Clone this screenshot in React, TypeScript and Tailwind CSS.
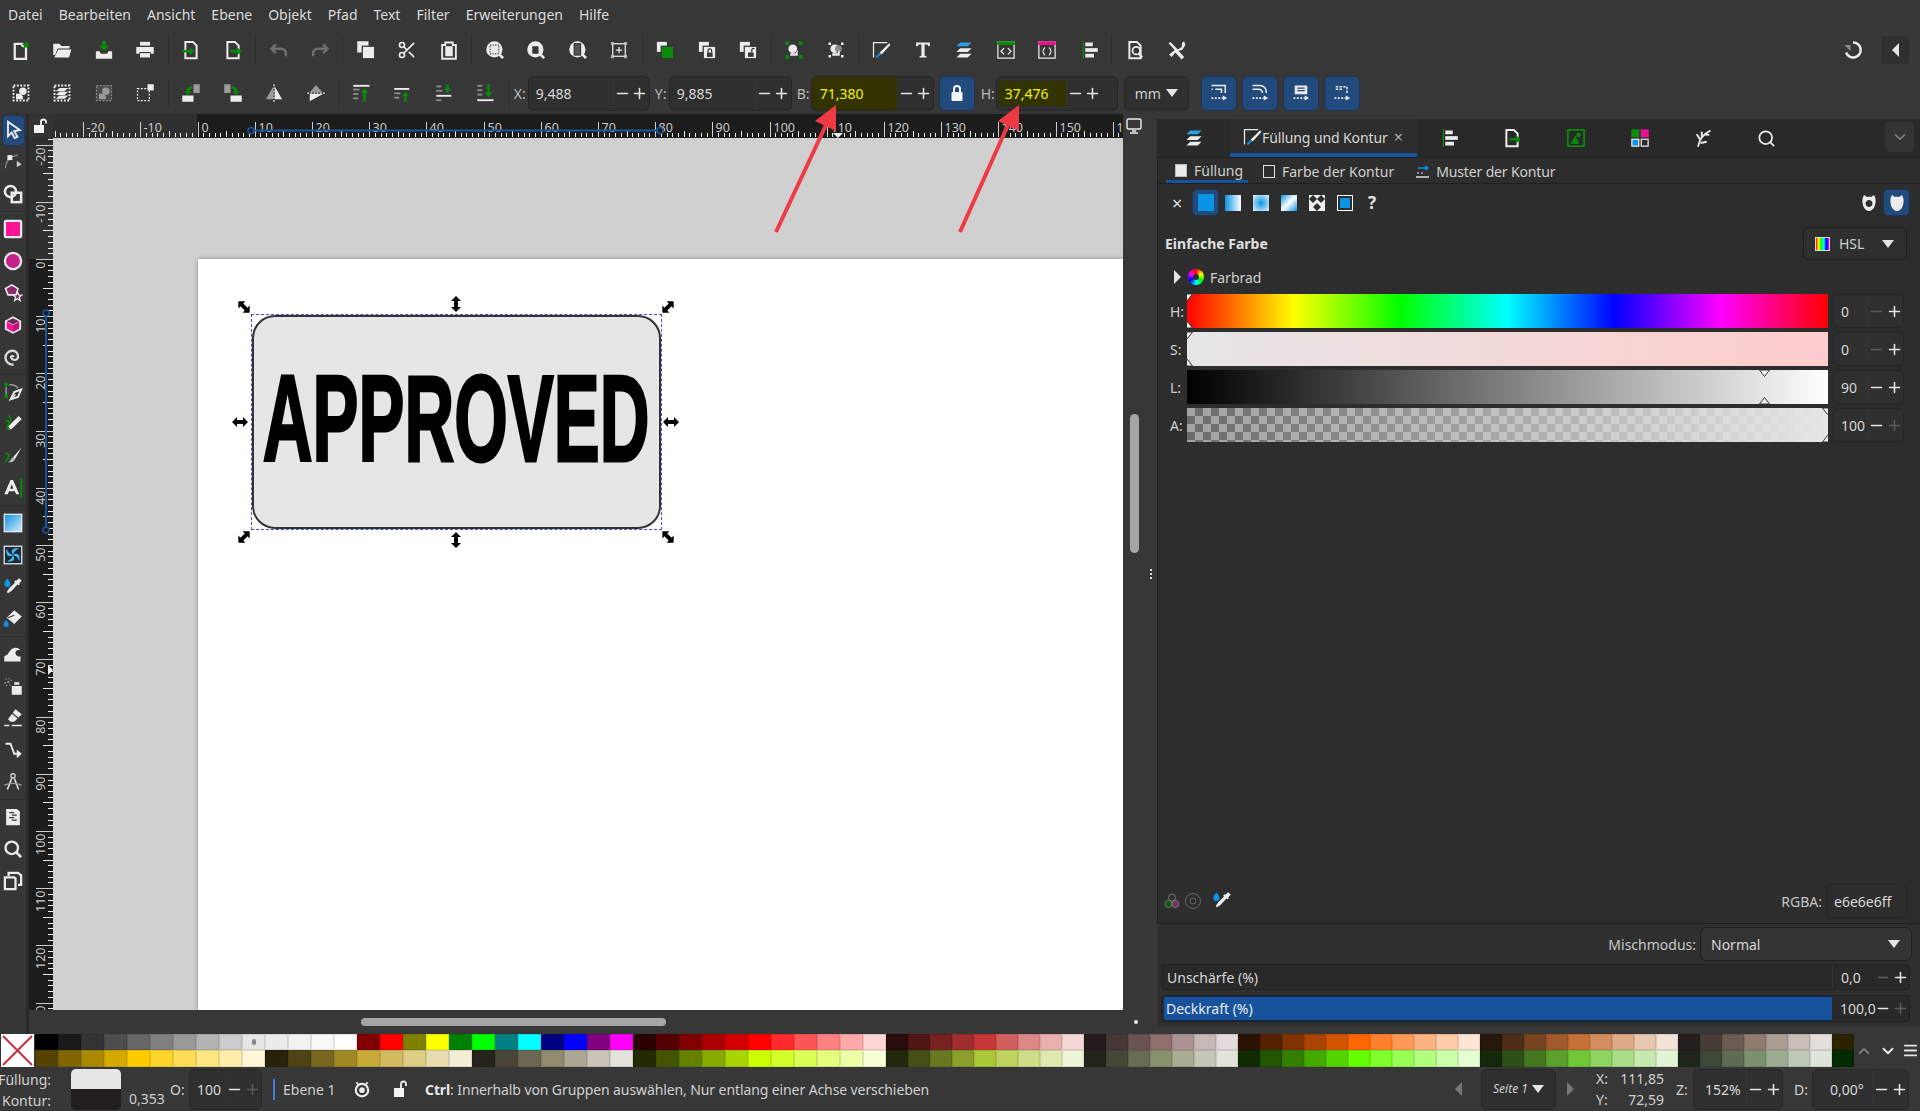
import type { ReactNode } from 'react';
import { Minus, Plus, Scissors, Search, ChevronDown, ChevronUp, Menu } from 'lucide-react';

const W = '#ececec';
const G = '#0a8a0a';
const B = '#0a94e6';
const D = '#8a8a8a';

function I({ children, s = 20 }: { children: ReactNode; s?: number }) {
  return (
    <svg width={s} height={s} viewBox="0 0 16 16" className="shrink-0">
      {children}
    </svg>
  );
}

// shared little pieces of the inkscape icon set
const doc = <path d="M3.5 1.5h6l3 3v10h-9z" fill="none" stroke={W} strokeWidth="1.6" />;
const dashBox = <rect x="2" y="2" width="12" height="12" fill="none" stroke={W} strokeWidth="1.5" strokeDasharray="1.5 1.2" />;
const pict = <g><circle cx="9.5" cy="6.5" r="3" fill={W} /><path d="M4 13V8.5h3.5l2 2V13z" fill={W} /></g>;
const shield = 'M3 1C1 4 1 8 2 11c1 4 4 6 6 6s5-2 6-6c1-3 1-7-1-10l-3 2c-1-.3-3-.3-4 0z';

const top1: ReactNode[][] = [
  [
    <I><path d="M3 3h6v1.5l3 1V15H3z" fill="none" stroke={W} strokeWidth="1.8" /><polygon points="12,0.5 13,3 15.5,3 13.5,4.7 14.3,7.2 12,5.7 9.8,7.2 10.5,4.7 8.5,3 11,3" fill={G} /></I>,
    <I><path d="M1 3h5l1.5 1.7H14v2H4.5L2.5 12H1z" fill={W} /><path d="M5 7.6h10.5L13.6 14H1.8z" fill={W} /></I>,
    <I><path d="M6.6 0.5h2.8v4H12L8 8.5 4 4.5h2.6z" fill={G} /><path d="M1.5 9h3l1 2h5l1-2h3v6h-13z" fill={W} /></I>,
    <I><rect x="4" y="1.5" width="8" height="3" fill={W} /><path d="M1 5.5h14V11h-2.5V9.5h-9V11H1z" fill={W} /><rect x="4" y="10.5" width="8" height="3.5" fill={W} /></I>,
  ],
  [
    <I>{doc}<path d="M1 8h6V5.5L10.5 9 7 12.5V10H1z" fill={G} /></I>,
    <I>{doc}<path d="M6 8h5V5.5L15 9l-4 3.5V10H6z" fill={G} /></I>,
  ],
  [
    <I><path d="M5.5 3.5 2 7l3.5 3.5M2.5 7H10a3.5 3.5 0 0 1 3.5 3.5V13" fill="none" stroke="#6e6e6e" strokeWidth="2" /></I>,
    <I><path d="M10.5 3.5 14 7l-3.5 3.5M13.5 7H6a3.5 3.5 0 0 0-3.5 3.5V13" fill="none" stroke="#6e6e6e" strokeWidth="2" /></I>,
  ],
  [
    <I><rect x="1" y="1" width="9" height="9" fill={W} /><rect x="5" y="5" width="10" height="10" fill={W} stroke="#363636" /></I>,
    <Scissors size={20} color={W} strokeWidth={2} />,
    <I><path d="M5 2h6v2h2.5v11h-11V4H5z" fill="none" stroke={W} strokeWidth="1.5" /><rect x="5" y="5" width="6" height="8" fill={W} /></I>,
  ],
  [
    <I><circle cx="7.5" cy="7.5" r="6.5" fill={W} /><path d="m11.5 11.5 3 3" stroke={W} strokeWidth="2.2" /><rect x="4" y="4" width="7" height="7" fill="none" stroke="#444" strokeDasharray="1 1" /></I>,
    <I><circle cx="7.5" cy="7.5" r="6.5" fill={W} /><path d="m11.5 11.5 3 3" stroke={W} strokeWidth="2.2" /><rect x="5" y="5" width="5" height="6" fill="#363636" /></I>,
    <I><circle cx="7.5" cy="7.5" r="6.5" fill={W} /><path d="m11.5 11.5 3 3" stroke={W} strokeWidth="2.2" /><rect x="5" y="3" width="5" height="9" fill="#555" stroke="#333" /></I>,
    <I><path d="M4 2H2v2M12 2h2v2M4 14H2v-2M12 14h2v-2" fill="none" stroke="#aaa" /><rect x="3" y="3" width="10" height="10" fill="none" stroke={W} /><path d="M8 5.5v5M5.5 8h5" stroke={W} /></I>,
  ],
  [
    <I><rect x="1.5" y="1.5" width="8" height="8" fill={W} /><rect x="5" y="5" width="10" height="10" fill={G} stroke="#363636" /></I>,
    <I><rect x="1.5" y="1.5" width="8" height="8" fill={W} /><rect x="5" y="5" width="10" height="10" fill={W} stroke="#363636" /><path d="M8 10h4.5v3.5H8z" fill="#363636" /><path d="M8.8 10V8.5a1.4 1.4 0 0 1 2.9 0V10" fill="none" stroke="#363636" /></I>,
    <I><rect x="1.5" y="1.5" width="8" height="8" fill={W} /><rect x="5" y="5" width="10" height="10" fill={W} stroke="#363636" /><path d="M8 10h4.5v3.5H8z" fill="#363636" /><path d="M11 10V8a1.4 1.4 0 0 1 2.2-1" fill="none" stroke="#363636" /></I>,
  ],
  [
    <I><path d="M1 1h3v3H1zM12 1h3v3h-3zM1 12h3v3H1zM12 12h3v3h-3z" fill={G} /><circle cx="7" cy="7" r="3.5" fill={W} /><path d="M5 10.5h4l2-2.5v4.5H5z" fill={W} /></I>,
    <I><path d="M2 2h2v2H2zM12 2h2v2h-2zM2 12h2v2H2zM12 12h2v2h-2z" fill={W} /><circle cx="7" cy="7" r="3.5" fill={W} /><circle cx="10" cy="7" r="2.8" fill="#888" /><path d="M5 10.5h4l2-2.5v4.5H5z" fill={W} /></I>,
  ],
  [
    <I><path d="M2 14V2h11" fill="none" stroke={W} /><path d="M14.5 2.5 7 10l1.5 1.5L15.5 4z" fill={W} /><path d="M7 10l-3 3 .5 1.5L8 11.5z" fill={B} /></I>,
    <I><path d="M2.5 2h11v3h-1.2L11.5 3.5H9.3V12.5l1.5.5v1H5.2v-1l1.5-.5V3.5H4.5L3.7 5H2.5z" fill={W} /></I>,
    <I><path d="M5 2h9l-3 3H2z" fill="#2aa3e6" /><path d="M5 6.5h9l-3 3H2z" fill={W} /><path d="M5 11h9l-3 3H2z" fill={W} /></I>,
    <I><rect x="1.5" y="1.5" width="13" height="13" fill="none" stroke={W} /><rect x="1" y="1" width="14" height="3" fill={G} /><path d="M6.5 6.5 4 9l2.5 2.5M9.5 6.5 12 9l-2.5 2.5" fill="none" stroke={W} /></I>,
    <I><rect x="1.5" y="1.5" width="13" height="13" fill="none" stroke={W} /><rect x="1" y="1" width="14" height="3" fill="#e8108c" /><path d="M6.5 6C5 6 5.5 8.8 4.5 9c1 .2.5 3 2 3M9.5 6c1.5 0 1 2.8 2 3-1 .2-.5 3-2 3" fill="none" stroke={W} /></I>,
    <I><rect x="3" y="1" width="1" height="14" fill={G} /><rect x="5" y="2" width="6" height="3" fill={W} /><rect x="5" y="6.5" width="10" height="3" fill={W} /><rect x="5" y="11" width="7" height="3" fill={W} /></I>,
  ],
  [
    <I>{doc}<circle cx="9" cy="8.5" r="3" fill="#363636" stroke={W} strokeWidth="1.4" /><path d="m10.8 10.8 3 3" stroke={W} strokeWidth="1.8" /></I>,
    <I><path d="m2 2.5 1.5-1 6 6 3-2 .5-3.5 1.5-1 1 3-2.5 4-3 .5 4.5 5-2 2-5-5.5-3 3.5-2-2L7 8z" fill={W} /></I>,
  ],
];

const top2: ReactNode[][] = [
  [
    <I>{dashBox}{pict}</I>,
    <I>{dashBox}<path d="M6 4h7l-3 2.5H3zM6 7h7l-3 2.5H3zM6 10h7l-3 2.5H3z" fill={W} /></I>,
    <I><rect x="2" y="2" width="12" height="12" fill="#4a4a4a" stroke="#8a8a8a" strokeDasharray="1.5 1.2" /><circle cx="9.5" cy="6.5" r="3" fill="#9a9a9a" /><path d="M4 13V8.5h3.5l2 2V13z" fill="#9a9a9a" /></I>,
    <I><rect x="2" y="4.5" width="9.5" height="9.5" fill="none" stroke={W} strokeDasharray="1.5 1.2" /><rect x="10" y="1" width="5" height="5" fill={W} /></I>,
  ],
  [
    <I><rect x="1" y="10" width="9" height="5" fill={W} /><rect x="10" y="1" width="5" height="7" fill="#9a9a9a" /><path d="M9 2.5C6 2.5 4.5 4 4.5 6.5H2.5L5.5 9.5l3-3h-2C6.5 5.5 7.5 4.5 9 4.5z" fill={G} /></I>,
    <I><rect x="6" y="10" width="9" height="5" fill={W} /><rect x="1" y="1" width="5" height="7" fill="#9a9a9a" /><path d="M7 2.5c3 0 4.5 1.5 4.5 4h2l-3 3-3-3h2C9.5 5.5 8.5 4.5 7 4.5z" fill={G} /></I>,
    <I><path d="M7.3 3v10H1.5z" fill="#9a9a9a" /><path d="M8.7 3v10h5.8z" fill={W} /><path d="M8 1v14" stroke={W} strokeDasharray="1.5 1" /></I>,
    <I><path d="M3 7.3h10L8 1.500z" fill="#9a9a9a" /><path d="M3 8.7h10.5L3 14.5z" fill={W} /><path d="M1 8h14" stroke={W} strokeDasharray="1.5 1" /></I>,
  ],
  [
    <I><rect x="1" y="1.5" width="13" height="1.5" fill={W} /><rect x="1" y="4.5" width="5" height="1.5" fill={D} /><rect x="1" y="8" width="4" height="1.5" fill={D} /><rect x="1" y="11.5" width="4" height="1.5" fill={D} /><path d="M10 4 13 8h-2v7H9V8H7z" fill={G} /></I>,
    <I><rect x="1" y="4" width="12" height="1.5" fill={W} /><rect x="1" y="7.5" width="5" height="1.5" fill={D} /><rect x="1" y="11" width="4" height="1.5" fill={D} /><path d="M10 7 13 10.5h-2V15H9v-4.5H7z" fill={G} /></I>,
    <I><rect x="1" y="2" width="4" height="1.5" fill={D} /><rect x="1" y="5.5" width="5" height="1.5" fill={D} /><rect x="1" y="9.5" width="12" height="1.5" fill={W} /><rect x="1" y="13" width="4" height="1.5" fill={D} /><path d="M9 1h2v3.5h2L10 8 7 4.5h2z" fill={G} /></I>,
    <I><rect x="1" y="1.5" width="4" height="1.5" fill={D} /><rect x="1" y="5" width="4" height="1.5" fill={D} /><rect x="1" y="8.5" width="4" height="1.5" fill={D} /><rect x="1" y="13" width="13" height="1.5" fill={W} /><path d="M9 1h2v6.5h2L10 11.5 7 7.5h2z" fill={G} /></I>,
  ],
];

const flowBtn: ReactNode[] = [
  <I><path d="M2 2h11v6M5 5h5v3M2 5h1" fill="none" stroke={W} strokeWidth="1.2" /><path d="M2 12h9" stroke={W} strokeDasharray="1.5 1.2" strokeWidth="1.4" /><path d="m11 10 3.5 2-3.5 2z" fill={W} /></I>,
  <I><path d="M2 2h6a5 5 0 0 1 5 5v1M2 5h5a3 3 0 0 1 3 3" fill="none" stroke={W} strokeWidth="1.2" /><path d="M2 12h9" stroke={W} strokeDasharray="1.5 1.2" strokeWidth="1.4" /><path d="m11 10 3.5 2-3.5 2z" fill={W} /></I>,
  <I><path d="M3 2h10v7H3z" fill={W} /><path d="M5 4h6M5 6h6" stroke="#234a7c" /><path d="M2 12h9" stroke={W} strokeDasharray="1.5 1.2" strokeWidth="1.4" /><path d="m11 10 3.5 2-3.5 2z" fill={W} /></I>,
  <I><path d="M3 3h9v6M3 5h6" fill="none" stroke={W} strokeWidth="1.2" strokeDasharray="2 1" /><path d="M2 12h9" stroke={W} strokeDasharray="1.5 1.2" strokeWidth="1.4" /><path d="m11 10 3.5 2-3.5 2z" fill={W} /></I>,
];

const cursor = <path d="M4 1.5 13.5 8 9 9l2.5 4.5-2.2 1L7 10l-3 3z" fill="#234a7c" stroke={W} strokeWidth="1.5" />;

const tools: ReactNode[][] = [
  [
    <span className="flex h-[31px] w-[23px] items-center justify-center rounded-[5px] border border-[#1c3557] bg-[#234a7c]"><I>{cursor}</I></span>,
    <I><path d="M2 13C2 8 4 4 12 2.5" fill="none" stroke="#8a8a8a" /><rect x="3.5" y="2.5" width="4" height="4" fill={W} /><path d="m11 7 4 3-4 2z" fill="#ccc" /></I>,
    <I><circle cx="6" cy="6" r="4.500" fill="none" stroke={W} strokeWidth="2" /><rect x="7" y="7" width="7.5" height="7.5" fill="none" stroke={W} strokeWidth="2" /></I>,
  ],
  [
    <I><rect x="1.5" y="1.5" width="13" height="13" rx="1" fill="#ff1493" stroke={W} strokeWidth="1.8" /></I>,
    <I><circle cx="8" cy="8" r="6.5" fill="#c8208a" stroke={W} strokeWidth="1.8" /></I>,
    <I><path d="m7 1.5 5 3-1.5 5H4l-2-5z" fill="#8e2a6e" stroke={W} strokeWidth="1.3" /><path d="m11.5 7 1 2.5 2.5.2-2 1.700.7 2.600-2.200-1.400-2.200 1.400.7-2.600-2-1.700 2.500-.2z" fill="#8e2a6e" stroke={W} /></I>,
    <I><path d="M8 1 14.5 4.5v7L8 15l-6.5-3.5v-7z" fill={W} /><path d="M8 8v5.500l-5-2.800V5.300z" fill="#ff1493" /><path d="M8 8v5.500l5-2.800V5.300z" fill="#c2127a" /><path d="M8 2.5 13 5 8 7.500 3 5z" fill="#6e2a5a" /></I>,
    <I><path d="M8.500 8a1 1 0 0 0-2 .5 3 3 0 0 0 5.500 0C12.500 5 10 3 7.500 3A5.500 5.500 0 0 0 2 8.500C2 12 5 14.500 8.500 14" fill="none" stroke="#d8d8d8" strokeWidth="1.900" /></I>,
  ],
  [
    <I><circle cx="2.5" cy="2" r="1.7" fill={G} /><rect x="1" y="10" width="3" height="3" fill={G} /><path d="M2.5 10V4M5 2c3 0 6 1 7 3" fill="none" stroke="#aaa" /><path d="M14.5 6 9 8l-3 6 6-2z" fill="none" stroke={W} strokeWidth="1.5" /><path d="m6 14 4-4" stroke={W} /></I>,
    <I><path d="M2 6c1-1 2.5-1 3 .5S3 9 3.500 11" fill="none" stroke={G} strokeWidth="1.4" /><path d="M5 1c-1 2 3 2 1 5" fill="none" stroke={G} strokeWidth="1.2" /><path d="m12.5 1.5 2.5 2.5-8 8-3 .5.5-3z" fill={W} /><path d="m3 13 1-3 2 2z" fill={G} /></I>,
    <I><path d="M2 6c2 0 3 .5 2.500 2.500C4 11 2 11 2 13" fill="none" stroke={G} strokeWidth="1.5" /><path d="m15 1-7 8 1.500 1.500z" fill={W} /><path d="M8 9c-2 1-1.500 3-4 4 3 .5 5-1 5.500-2.500z" fill="#bbb" /></I>,
    <I><path d="M6 1.5h2l5 11.5H10.500L9.500 10.500H4.800L3.800 13H1z" fill={W} /><path d="M7 5 5.700 8.500h2.600z" fill="#363636" /><rect x="14" y="0" width="1.5" height="16" fill={G} /></I>,
  ],
  [
    <svg width="20" height="20" viewBox="0 0 16 16"><defs><linearGradient id="grd" x1="0" y1="0" x2="1" y2="1"><stop offset="0" stopColor="#0a8fe0" /><stop offset="1" stopColor="#d8eefc" /></linearGradient></defs><rect x="1" y="1" width="14" height="14" fill="url(#grd)" stroke={W} /></svg>,
    <I><rect x="1" y="1" width="14" height="14" fill="#1a2a38" stroke={W} /><path d="M8 8C5 3 10 2 13 3 10 4 9 5 8 8c5-3 6 2 5 5-1-3-2-4-5-5 3 5-2 6-5 5 3-1 4-2 5-5C3 11 2 6 3 3c1 3 2 4 5 5z" fill="#44b8f0" /></I>,
    <I><path d="m13 1 2 2-2 2 .5.5-1 1-1-.5L7 11l-3 2-1-1 2-3 4.500-4.500-.5-1 1-1 .5.5z" fill={W} /><path d="M3.500 1c1.500 2 2.500 3 2.500 4.500a2.500 2.500 0 0 1-5 0C1 4 2 3 3.500 1z" fill={B} /></I>,
    <I><path d="M9 1 15 6l-6 6-6-5z" fill={W} /><path d="m4 7 5-2" stroke="#363636" /><path d="M2.500 8.500c1 1.500 2 2.500 2 3.800a2 2 0 0 1-4 0C.5 11 1.500 10 2.500 8.500z" fill={B} /></I>,
  ],
  [
    <I><path d="M1 14V10c1-1 2-1 3-2 1-2 3-5 6-5 2 0 3 1 4 2-3-1-5 1-3.500 3.500.5 1 1.500 1.500 3.500 1.500v4z" fill={W} /></I>,
    <I><rect x="7" y="8" width="8" height="7" fill={W} /><rect x="9" y="5" width="4" height="2" fill={W} /><path d="M2 2h1v1H2zM4.500 1.500h1v1h-1zM1 5h1.500v1H1zM3.500 4h1.500v1.500H3.500zM6 3h1v1H6zM2.500 7h1v1h-1zM5 6.500h1v1H5z" fill="#999" /></I>,
    <I><path d="m10 1 5 4-6 6H6L4 9z" fill={W} /><path d="m7 4 5 4" stroke="#363636" /><path d="M1 14h4M7 14h8" stroke={W} strokeWidth="1.3" /></I>,
    <I><path d="M2 3 6 3 9 11l3.500 0" fill="none" stroke={W} strokeWidth="1.5" /><path d="m11 7.500 4 3.500-4 3.500z" fill={W} /></I>,
    <I><circle cx="8" cy="3" r="1.7" fill="none" stroke="#ddd" /><path d="M7 5 3.500 14M9 5l3.500 9" stroke="#ddd" strokeWidth="1.3" /><path d="M1 10.500c4-1.500 10-1.500 14 0" fill="none" stroke="#999" /></I>,
  ],
  [
    <I><path d="M2.500 1.500H11l2.500 2v11h-11z" fill={W} /><path d="M5 4.500h4M7 6.500h4M5 8.500h4M7 10.500h4" stroke="#363636" /></I>,
    <I><circle cx="7" cy="7" r="5" fill="none" stroke={W} strokeWidth="1.8" /><path d="m10.500 10.500 4 4" stroke={W} strokeWidth="2.2" /></I>,
    <I><path d="M1.500 5H9l1 1v8.500H1.500z" fill="none" stroke={W} strokeWidth="1.8" /><path d="M4.500 4V1.500H12L14.500 3.500V11H12" fill="none" stroke={W} strokeWidth="1.8" /></I>,
  ],
];

const gray = ['#000000','#1a1a1a','#333333','#4d4d4d','#666666','#808080','#999999','#b3b3b3','#cccccc','#e6e6e6','#ececec','#f2f2f2','#f9f9f9','#ffffff'];
const row1 = [...gray,'#800000','#ff0000','#808000','#ffff00','#008000','#00ff00','#008080','#00ffff','#000080','#0000ff','#800080','#ff00ff',
  '#2b0000','#550000','#800000','#aa0000','#d40000','#ff0000','#ff2a2a','#ff5555','#ff8080','#ffaaaa','#ffd5d5',
  '#280b0b','#501616','#782121','#a02c2c','#c83737','#d35f5f','#de8787','#e9afaf','#f4d7d7',
  '#241c1c','#483737','#6c5353','#916f6f','#ac9393','#c8b7b7','#e3dbdb',
  '#2b1100','#552200','#803300','#aa4400','#d45500','#ff6600','#ff7f2a','#ff9955','#ffb380','#ffccaa','#ffe6d5',
  '#28170b','#502d16','#784421','#a05a2c','#c87137','#d38d5f','#deaa87','#e9c6af','#f4e3d7',
  '#241f1c','#483e37','#6c5d53','#917c6f','#ac9d93','#c8beb7','#e3dedb','#2b2200'];
const row2 = ['#554400','#806600','#aa8800','#d4aa00','#ffcc00','#ffd42a','#ffdd55','#ffe680','#ffeeaa','#fff6d5',
  '#28220b','#504416','#786721','#a08924','#c8ab37','#d3bc5f','#decd87','#e9ddaf','#f4eed7',
  '#24221c','#484537','#6c6753','#918a6f','#aca793','#c8c4b7','#e3e2db',
  '#222b00','#445500','#668000','#88aa00','#aad400','#ccff00','#d4ff2a','#ddff55','#e5ff80','#eeffaa','#f6ffd5',
  '#22280b','#445016','#677821','#89a02c','#abc837','#bcd35f','#cdde87','#dde9af','#eef4d7',
  '#22241c','#454837','#676c53','#8a916f','#a7ac93','#c4c8b7','#e2e3db',
  '#112b00','#225500','#338000','#44aa00','#55d400','#66ff00','#7fff2a','#99ff55','#b3ff80','#ccffaa','#e5ffd5',
  '#16280b','#2d5016','#447821','#5aa02c','#71c837','#8dd35f','#aade87','#c6e9af','#e3f4d7',
  '#1f241c','#3e4837','#5d6c53','#7c916f','#9dac93','#bec8b7','#dee3db','#002b00'];

const menus = ['Datei', 'Bearbeiten', 'Ansicht', 'Ebene', 'Objekt', 'Pfad', 'Text', 'Filter', 'Erweiterungen', 'Hilfe'];

function Sep() {
  return <div className="mx-[1.7px] h-[30px] w-px bg-[#2f2f2f]" />;
}

function Tri({ up, dim, side }: { up?: boolean; dim?: boolean; side?: 'l' | 'r' }) {
  const pts = side === 'l' ? '8,0 8,14 1,7' : side === 'r' ? '1,0 1,14 8,7' : up ? '0,8 12,8 6,0' : '0,0 12,0 6,8';
  return (
    <svg width={side ? 9 : 12} height={side ? 14 : 8} className="shrink-0">
      <polygon points={pts} fill={dim ? '#777' : '#e4e4e4'} />
    </svg>
  );
}

function Spin({ v, className, field, tc, minusDim, plusDim }: { v: string; className: string; field?: string; tc?: string; minusDim?: boolean; plusDim?: boolean }) {
  return (
    <div className={`flex items-stretch rounded-[6px] border border-[#262626] bg-[#2f2f2f] ${className}`}>
      <div className={`flex min-w-0 flex-1 ${field ?? ''}`}>
        <span className={`flex items-center ${tc ?? 'pl-[7px] text-[#d8d8d8]'}`}>{v}</span>
      </div>
      <div className="flex w-[18px] items-center justify-center border-l border-[#333]">
        <Minus size={17} strokeWidth={2.2} color={minusDim ? '#5c5c5c' : '#e6e6e6'} />
      </div>
      <div className="flex w-[18px] items-center justify-center">
        <Plus size={17} strokeWidth={2.2} color={plusDim ? '#5c5c5c' : '#e6e6e6'} />
      </div>
    </div>
  );
}

function Ruler() {
  const ticks = [];
  for (let mm = -25; mm <= 162; mm++) {
    const x = Math.round(144.5 + mm * 5.72) + 0.5;
    const major = mm % 10 === 0;
    const mid = mm % 5 === 0;
    ticks.push(<line key={mm} x1={x} x2={x} y1={major ? 8 : mid ? 17 : 19} y2={23} stroke={major ? '#cfcfcf' : '#f0f0f0'} />);
    if (major) {
      ticks.push(<text key={`t${mm}`} x={x + 3} y={18} fontSize="12.5" fill="#c9c9c9">{mm}</text>);
    }
  }
  return (
    <svg width="1070" height="24" className="block font-['Noto_Sans',sans-serif]">
      {ticks}
      <line x1="198" x2="607" y1="16.5" y2="16.5" stroke="#1a56a0" strokeWidth="2" />
      <circle cx="198" cy="16.5" r="3" fill="#1c1c1c" stroke="#1a56a0" strokeWidth="1.5" />
      <circle cx="607" cy="16.5" r="3" fill="#1c1c1c" stroke="#1a56a0" strokeWidth="1.5" />
      <polygon points="780,19 790,19 785,24" fill="#f0f0f0" />
    </svg>
  );
}

function VRuler() {
  const ticks = [];
  for (let mm = -25; mm <= 134; mm++) {
    const y = Math.round(121 + mm * 5.72) + 0.5;
    const major = mm % 10 === 0;
    const mid = mm % 5 === 0;
    ticks.push(<line key={mm} y1={y} y2={y} x1={major ? 7 : mid ? 14 : 19} x2={24} stroke={major ? '#cfcfcf' : '#f0f0f0'} />);
    if (major) {
      ticks.push(<text key={`t${mm}`} x={16} y={y + 2} fontSize="12.5" fill="#c9c9c9" textAnchor="end" transform={`rotate(-90 16 ${y + 2})`}>{mm}</text>);
    }
  }
  return (
    <svg width="24" height="872" className="block font-['Noto_Sans',sans-serif]">
      {ticks}
      <line x1="17" x2="17" y1="175" y2="392" stroke="#1a56a0" strokeWidth="2" />
      <circle cx="17" cy="175" r="3" fill="#1c1c1c" stroke="#1a56a0" strokeWidth="1.5" />
      <circle cx="17" cy="392" r="3" fill="#1c1c1c" stroke="#1a56a0" strokeWidth="1.5" />
      <polygon points="19,527 19,537 24,532" fill="#f0f0f0" />
    </svg>
  );
}

function Handle({ className }: { className: string }) {
  return (
    <svg width="16" height="16" viewBox="0 0 16 16" className={`absolute ${className}`}>
      <path d="M0 8 5 3v3h6V3l5 5-5 5v-3H5v3z" fill="#000" />
    </svg>
  );
}

function Thumb({ className, up }: { className: string; up?: boolean }) {
  return (
    <svg width="11" height="7" className={`absolute ${className}`}>
      <polygon points={up ? '0.5,7 10.5,7 5.5,0.5' : '0.5,0 10.5,0 5.5,6.5'} fill="#f4f4f4" stroke="#333" />
    </svg>
  );
}

function SliderRow({ label, bar, thumbs, v, minusDim, plusDim }: { label: string; bar: string; thumbs: ReactNode; v: string; minusDim?: boolean; plusDim?: boolean }) {
  return (
    <div className="flex h-[34px] items-stretch pl-[12px]">
      <span className="flex w-[17px] items-center text-[#d0d0d0]">{label}</span>
      <div className={`relative w-[641px] overflow-hidden ${bar}`}>{thumbs}</div>
      <Spin v={v} className="ml-[5px] w-[71px]" minusDim={minusDim} plusDim={plusDim} />
    </div>
  );
}

function Tools() {
  return (
    <div className="flex w-[29px] shrink-0 flex-col border-r-[3px] border-[#2a2a2a] bg-[#363636]">
      {tools.map((grp, i) => (
        <div key={i} className="flex flex-col">
          {i > 0 && <div className="my-px h-px bg-[#2e2e2e]" />}
          {grp.map((ic, j) => (
            <div key={j} className="flex h-[32px] items-center justify-center">{ic}</div>
          ))}
        </div>
      ))}
    </div>
  );
}

function CanvasArea() {
  return (
    <div className="flex w-[1116px] shrink-0 flex-col">
      <div className="flex h-[24px]">
        <div className="flex w-[24px] items-center justify-center bg-[#333]">
          <svg width="16" height="16" viewBox="0 0 16 16">
            <rect x="1" y="7" width="10" height="8" fill="#f2f2f2" />
            <path d="M8 7V4a2.5 2.5 0 0 1 5 0v1.5" fill="none" stroke="#f2f2f2" strokeWidth="1.8" />
          </svg>
        </div>
        <div className="w-[1070px] bg-[linear-gradient(to_right,#303030_144px,#1c1c1c_144px)]">
          <Ruler />
        </div>
        <div className="flex w-[22px] items-center justify-center">
          <svg width="16" height="16" viewBox="0 0 16 16">
            <rect x="1" y="1" width="14" height="10" rx="1.5" fill="none" stroke="#eee" strokeWidth="1.4" />
            <path d="M6 13h4M4 15h8" stroke="#eee" strokeWidth="1.4" />
          </svg>
        </div>
      </div>
      <div className="flex h-[872px]">
        <div className="w-[24px] bg-[linear-gradient(to_bottom,#303030_121px,#1c1c1c_121px)]">
          <VRuler />
        </div>
        <div className="relative w-[1070px] overflow-hidden bg-[#d0d0d0]">
          <div className="absolute left-[145px] top-[121px] h-[900px] w-[1100px] bg-white shadow-[0_0_4px_rgba(0,0,0,0.35)]" />
          <div className="absolute left-[199px] top-[177px] flex h-[214px] w-[409px] items-center justify-center overflow-hidden rounded-[23px] border-2 border-[#333] bg-[#e6e6e6] pb-[8px]">
            <span className="origin-center scale-x-[0.56] whitespace-nowrap font-['Liberation_Sans',sans-serif] text-[123px] font-bold leading-none text-black [-webkit-text-stroke:3px_black]">
              APPROVED
            </span>
          </div>
          <div className="absolute left-[198px] top-[176px] h-[216px] w-[411px] border border-dashed border-[#4a4ad0]" />
          <Handle className="left-[183px] top-[161px] rotate-45" />
          <Handle className="left-[395px] top-[158px] rotate-90" />
          <Handle className="left-[607px] top-[161px] -rotate-45" />
          <Handle className="left-[179px] top-[276px]" />
          <Handle className="left-[610px] top-[276px]" />
          <Handle className="left-[183px] top-[391px] -rotate-45" />
          <Handle className="left-[395px] top-[394px] rotate-90" />
          <Handle className="left-[607px] top-[391px] rotate-45" />
        </div>
        <div className="flex w-[22px] justify-center">
          <div className="mt-[276px] h-[139px] w-[9px] rounded-full bg-[#a5a5a5]" />
        </div>
      </div>
      <div className="flex h-[24px] items-center">
        <div className="ml-[332px] h-[8px] w-[305px] rounded-full bg-[#a5a5a5]" />
        <div className="ml-[468px] h-[4px] w-[4px] rounded-full bg-[#e8e8e8]" />
      </div>
    </div>
  );
}

function Panel() {
  return (
    <div className="flex w-[763px] shrink-0 flex-col pt-[5px]">
      <div className="flex h-[38px] bg-[#292929]">
        <div className="flex w-[73px] items-center justify-center">
          <I><path d="M5 2h9l-3 3H2z" fill="#2aa3e6" /><path d="M5 6.5h9l-3 3H2z" fill={W} /><path d="M5 11h9l-3 3H2z" fill={W} /></I>
        </div>
        <div className="flex w-[187px] items-center border-b-4 border-[#17539c] bg-[#2d2d2d] pl-[12px] pt-[2px] text-[#d8d8d8]">
          <I><path d="M2 14V2h11" fill="none" stroke={W} /><path d="M14.5 2.5 7 10l1.5 1.5L15.5 4z" fill={W} /><path d="M7 10l-3 3 .5 1.5L8 11.5z" fill={B} /></I>
          <span className="whitespace-nowrap tracking-[-0.1px]">Füllung und Kontur</span>
          <span className="ml-[6px] text-[16px] leading-none text-[#aaa]">×</span>
        </div>
        {[
          <I><rect x="3" y="1" width="1" height="14" fill={G} /><rect x="5" y="2" width="6" height="3" fill={W} /><rect x="5" y="6.5" width="10" height="3" fill={W} /><rect x="5" y="11" width="7" height="3" fill={W} /></I>,
          <I>{doc}<path d="M6 8h5V5.5L15 9l-4 3.5V10H6z" fill={G} /></I>,
          <I><rect x="1.5" y="1.5" width="13" height="13" fill="none" stroke={G} strokeWidth="1.4" /><circle cx="10" cy="5.5" r="1.8" fill={G} /><path d="M3.5 12.5 7.5 6l3 6.5z" fill={G} /></I>,
          <I><rect x="1" y="1" width="6.5" height="6.5" fill={G} /><rect x="8.5" y="1" width="6.5" height="6.5" fill="#e8108c" /><rect x="1.5" y="9" width="5.5" height="5.5" fill={B} stroke={W} /><rect x="9" y="9" width="5.5" height="5.5" fill="#2a2a2a" stroke={W} /></I>,
          <I><path d="M4 15C5 9 8 5 14 2M5.5 9 3 5M7 7V3M9.5 5 13 5.5M6 12l5-1" fill="none" stroke={W} strokeWidth="1.5" /></I>,
          <Search size={19} color={W} strokeWidth={2.2} />,
        ].map((ic, i) => (
          <div key={i} className="flex w-[63.6px] items-center justify-center">{ic}</div>
        ))}
        <div className="ml-auto mr-[6px] mt-[3px] flex h-[30px] w-[29px] items-center justify-center rounded-[4px] bg-[#333]">
          <ChevronDown size={18} color="#888" />
        </div>
      </div>

      <div className="flex flex-1 flex-col border-l border-t border-[#1f1f1f] bg-[#2d2d2d]">
        <div className="flex h-[26px] items-center border-b border-[#1f1f1f] pt-[2px] text-[#d0d0d0]">
          <div className="ml-[8px] flex h-full w-[82px] items-center border-b-[3px] border-[#17539c] pl-[9px]">
            <div className="h-[13px] w-[12px] border border-[#bbb] bg-[#ececec]" />
            <span className="ml-[7px]">Füllung</span>
          </div>
          <div className="ml-[15px] h-[13px] w-[12px] border border-[#e0e0e0]" />
          <span className="ml-[7px]">Farbe der Kontur</span>
          <svg width="16" height="14" viewBox="0 0 16 14" className="ml-[21px]">
            <path d="M3 3h8" stroke={B} strokeWidth="1.5" /><path d="m10 0 4 3-4 3z" fill={B} />
            <path d="M2 8h2M6 8h2" stroke={W} /><path d="M1 12h13" stroke={W} strokeWidth="1.4" />
          </svg>
          <span className="ml-[5px] tracking-[-0.15px]">Muster der Kontur</span>
        </div>

        <div className="mt-[5px] flex h-[27px] items-center">
          <span className="ml-[14px] w-[20px] text-[18px] leading-none text-[#e0e0e0]">×</span>
          <div className="flex h-[27px] w-[27px] items-center justify-center rounded-[5px] border border-[#1c3557] bg-[#234a7c]">
            <div className="h-[17px] w-[16px] bg-[#0a94e6]" />
          </div>
          <div className="ml-[6px] h-[16px] w-[16px] bg-[linear-gradient(to_right,#0a94e6,#fff)]" />
          <div className="ml-[12px] h-[16px] w-[16px] bg-[radial-gradient(circle,#0a94e6,#e8f4fc)]" />
          <div className="ml-[12px] h-[16px] w-[16px] bg-[linear-gradient(135deg,#0a94e6,#fff,#0a94e6)]" />
          <svg width="16" height="16" viewBox="0 0 16 16" className="ml-[12px]">
            <rect width="16" height="16" fill="#eee" />
            <path d="M4 0l4 4-4 4-4-4zM12 0l4 4-4 4-4-4zM8 8l4 4-4 4-4-4z" fill="#2d2d2d" />
          </svg>
          <div className="ml-[12px] flex h-[16px] w-[16px] items-center justify-center border border-white">
            <div className="h-[10px] w-[10px] bg-[#0a94e6]" />
          </div>
          <span className="ml-[15px] text-[17px] font-bold text-[#e4e4e4]">?</span>
          <svg width="16" height="18" viewBox="0 0 16 18" className="ml-auto">
            <path fillRule="evenodd" d={`${shield}M8 6a3.500 3.500 0 1 0 .01 0z`} fill={W} />
          </svg>
          <div className="ml-[6px] mr-[10px] flex h-[27px] w-[27px] items-center justify-center rounded-[5px] border border-[#1c3557] bg-[#234a7c]">
            <svg width="16" height="18" viewBox="0 0 16 18">
              <path d={shield} fill={W} />
            </svg>
          </div>
        </div>

        <div className="mt-[11px] flex h-[33px] items-center">
          <span className="ml-[7px] font-bold text-[#e0e0e0]">Einfache Farbe</span>
          <div className="ml-auto mr-[13px] flex h-[33px] w-[104px] items-center rounded-[6px] border border-[#1f1f1f] bg-[#2f2f2f] pl-[11px] text-[#d0d0d0]">
            <div className="h-[14px] w-[15px] border border-[#ddd] bg-[linear-gradient(to_right,#f00,#ff0,#0f0,#0ff,#00f,#f0f)]" />
            <span className="ml-[9px]">HSL</span>
            <div className="ml-[18px]"><Tri /></div>
          </div>
        </div>

        <div className="flex h-[34px] items-center text-[#d0d0d0]">
          <div className="ml-[15px]"><Tri side="r" /></div>
          <div className="ml-[6px] flex h-[16px] w-[16px] items-center justify-center rounded-full bg-[conic-gradient(#f00,#ff0,#0f0,#0ff,#00f,#f0f,#f00)]">
            <div className="h-[6px] w-[6px] rounded-full bg-[#2d2d2d]" />
          </div>
          <span className="ml-[6px]">Farbrad</span>
        </div>

        <div className="flex flex-col gap-[4px]">
          <SliderRow label="H:" v="0" minusDim bar="bg-[linear-gradient(to_right,#f00,#ff0,#0f0,#0ff,#00f,#f0f,#f00)]"
            thumbs={<><Thumb className="-left-[5px] top-0" /><Thumb className="-left-[5px] bottom-0" up /></>} />
          <SliderRow label="S:" v="0" minusDim bar="bg-[linear-gradient(to_right,#e6e6e6,#ffcccc)]"
            thumbs={<><Thumb className="-left-[5px] top-0" /><Thumb className="-left-[5px] bottom-0" up /></>} />
          <SliderRow label="L:" v="90" bar="bg-[linear-gradient(to_right,#000,#fff)]"
            thumbs={<><Thumb className="left-[572px] top-0" /><Thumb className="left-[572px] bottom-0" up /></>} />
          <SliderRow label="A:" v="100" plusDim
            bar="[background-image:linear-gradient(to_right,transparent,#e6e6e6),conic-gradient(#6b6b6b_25%,#a2a2a2_0_50%,#6b6b6b_0_75%,#a2a2a2_0)] [background-size:100%_100%,16px_16px]"
            thumbs={<><Thumb className="-right-[5px] top-0" /><Thumb className="-right-[5px] bottom-0" up /></>} />
        </div>

        <div className="mb-[5px] mt-auto flex h-[34px] items-center">
          <svg width="18" height="18" viewBox="0 0 18 18" className="ml-[5px]">
            <circle cx="9" cy="5.5" r="3.5" fill="none" stroke="#777" /><circle cx="5.5" cy="12" r="3.5" fill="#0a5a0a" stroke="#777" /><circle cx="12.5" cy="12" r="3.5" fill="#7a2a6a" stroke="#777" />
          </svg>
          <svg width="18" height="18" viewBox="0 0 18 18" className="ml-[3px]">
            <circle cx="9" cy="9" r="7.5" fill="none" stroke="#666" /><circle cx="9" cy="9" r="3" fill="none" stroke="#666" />
          </svg>
          <div className="ml-[10px]">
            <I><path d="m13 1 2 2-2 2 .5.5-1 1-1-.5L7 11l-3 2-1-1 2-3 4.5-4.5-.5-1 1-1 .5.5z" fill={W} /><path d="M3.5 1c1.5 2 2.5 3 2.5 4.5a2.5 2.5 0 0 1-5 0C1 4 2 3 3.5 1z" fill={B} /></I>
          </div>
          <span className="ml-auto text-[#c4c4c4]">RGBA:</span>
          <div className="ml-[4px] mr-[13px] flex h-[34px] w-[81px] items-center rounded-[6px] border border-[#262626] pl-[7px] text-[#d8d8d8]">e6e6e6ff</div>
        </div>
      </div>

      <div className="flex h-[104px] shrink-0 flex-col border-t border-[#1f1f1f] bg-[#2f2f2f]">
        <div className="mt-[3px] flex h-[34px] items-center justify-end">
          <span className="mr-[4px] text-[#c8c8c8]">Mischmodus:</span>
          <div className="mr-[8px] flex h-[34px] w-[212px] items-center justify-between rounded-[6px] border border-[#1f1f1f] bg-[#333] pl-[10px] pr-[11px] text-[#d8d8d8]">
            Normal <Tri />
          </div>
        </div>
        <div className="ml-[4px] mr-[10px] mt-[3px] flex h-[26px] items-stretch rounded-[4px] border border-[#222] bg-[#292929]">
          <span className="flex w-[670px] items-center pl-[5px] text-[#d8d8d8]">Unschärfe (%)</span>
          <span className="flex w-[43px] items-center border-l border-[#333] pl-[8px] text-[#d8d8d8]">0,0</span>
          <div className="flex w-[16px] items-center justify-center"><Minus size={17} strokeWidth={2.2} color="#5c5c5c" /></div>
          <div className="flex w-[18px] items-center justify-center"><Plus size={17} strokeWidth={2.2} color="#e6e6e6" /></div>
        </div>
        <div className="ml-[4px] mr-[10px] mt-[5px] flex h-[27px] items-stretch rounded-[4px] border border-[#222] bg-[#292929]">
          <span className="ml-[2px] flex w-[668px] items-center rounded-[2px] border-y border-[#0c2a50] bg-[#17539c] pl-[2px] text-[#eaeaea]">Deckkraft (%)</span>
          <span className="flex w-[43px] items-center pl-[8px] text-[#d8d8d8]">100,0</span>
          <div className="flex w-[16px] items-center justify-center"><Minus size={17} strokeWidth={2.2} color="#e6e6e6" /></div>
          <div className="flex w-[18px] items-center justify-center"><Plus size={17} strokeWidth={2.2} color="#5c5c5c" /></div>
        </div>
      </div>
      <div className="h-[7px] shrink-0" />
    </div>
  );
}

function Palette() {
  return (
    <div className="flex h-[33px] shrink-0">
      <svg width="35" height="33" viewBox="0 0 35 33" className="shrink-0">
        <rect x="1" y="0" width="33" height="33" fill="#fff" />
        <path d="M3 2 32 31M32 2 3 31" stroke="#c4323c" strokeWidth="2" />
      </svg>
      <div className="grid w-[1819px] grid-cols-[repeat(37,23px)_repeat(44,22px)] grid-rows-[16px_17px]">
        {row1.map((c, i) => (
          <div key={i} className="flex items-center justify-center border border-black/10" style={{ backgroundColor: c }}>
            {i === 9 && <div className="h-[6px] w-[4px] rounded-full bg-[#888]" />}
          </div>
        ))}
        {row2.map((c, i) => (
          <div key={i} className="border border-black/10" style={{ backgroundColor: c }} />
        ))}
      </div>
      <div className="flex flex-1 items-center pl-[1px]">
        <ChevronUp size={18} color="#777" strokeWidth={2.5} />
        <ChevronDown size={18} color="#e6e6e6" strokeWidth={2.5} className="ml-[6px]" />
        <Menu size={17} color="#e6e6e6" strokeWidth={2.5} className="ml-[5px]" />
      </div>
    </div>
  );
}

function Status() {
  return (
    <div className="flex h-[44px] shrink-0 items-center text-[#d0d0d0]">
      <div className="flex w-[51px] flex-col items-end pt-[2px] leading-[21px]">
        <span>Füllung:</span>
        <span>Kontur:</span>
      </div>
      <div className="ml-[20px] flex w-[50px] flex-col">
        <div className="h-[20px] rounded-t-[5px] bg-[#e6e6e6]" />
        <div className="h-[21px] rounded-b-[5px] bg-[#231f20]" />
      </div>
      <span className="ml-[8px] mt-[19px] w-[41px]">0,353</span>
      <span className="w-[19px]">O:</span>
      <Spin v="100" className="h-[41px] w-[73px]" plusDim />
      <div className="ml-[11px] h-[21px] w-[2px] bg-[#3f7fd8]" />
      <span className="ml-[8px] w-[70px]">Ebene 1</span>
      <div className="w-[40px]">
        <svg width="18" height="18" viewBox="0 0 16 16">
          <path d="M3 2 5 4.5M13 2l-2 2.5" stroke={W} strokeWidth="1.5" />
          <circle cx="8" cy="9" r="5.5" fill="none" stroke={W} strokeWidth="2" />
          <circle cx="8" cy="9" r="2.5" fill={W} />
        </svg>
      </div>
      <div className="w-[32px]">
        <svg width="16" height="18" viewBox="0 0 16 18">
          <rect x="1" y="8" width="10" height="9" fill="#f2f2f2" />
          <path d="M8 8V4a2.5 2.5 0 0 1 5 0v2" fill="none" stroke="#f2f2f2" strokeWidth="1.8" />
        </svg>
      </div>
      <span className="whitespace-nowrap tracking-[-0.1px]"><b className="text-[#e8e8e8]">Ctrl</b>: Innerhalb von Gruppen auswählen, Nur entlang einer Achse verschieben</span>

      <div className="ml-auto flex items-center pr-[11px]">
        <Tri side="l" dim />
        <div className="ml-[18px] flex h-[41px] w-[75px] items-center justify-center gap-[4px] rounded-[6px] border border-[#262626] bg-[#2f2f2f]">
          <span className="text-[12px] italic">Seite 1</span>
          <Tri />
        </div>
        <div className="ml-[10px]"><Tri side="r" dim /></div>
        <div className="ml-[21px] flex w-[68px] flex-col leading-[21px]">
          <div className="flex justify-between"><span>X:</span><span>111,85</span></div>
          <div className="flex justify-between"><span>Y:</span><span>72,59</span></div>
        </div>
        <span className="ml-[12px] w-[17px]">Z:</span>
        <Spin v="152%" className="h-[41px] w-[90px]" tc="pl-[11px] text-[#d8d8d8]" />
        <span className="ml-[11px] w-[18px]">D:</span>
        <Spin v="0,00°" className="h-[41px] w-[97px]" tc="pl-[17px] text-[#d8d8d8]" />
      </div>
    </div>
  );
}

export default function App() {
  return (
    <div className="relative flex h-[1111px] w-[1920px] flex-col overflow-hidden bg-[#373737] font-['Noto_Sans',sans-serif] text-[14px] text-[#d8d8d8]">
      <div className="flex h-[28px] shrink-0 items-center gap-[16px] pl-[8px] text-[#dcdcdc]">
        {menus.map(m => <span key={m}>{m}</span>)}
      </div>

      <div className="flex h-[44px] shrink-0 items-center">
        {top1.map((g, i) => (
          <div key={i} className="flex items-center">
            {i > 0 && <Sep />}
            {g.map((ic, j) => <div key={j} className="flex w-[41.5px] justify-center">{ic}</div>)}
          </div>
        ))}
        <div className="ml-auto flex items-center pr-[11px]">
          <svg width="20" height="20" viewBox="0 0 16 16">
            <path d="M8 2a6 6 0 1 1-5.5 8" fill="none" stroke={W} strokeWidth="2" />
            <path d="M1 4h5v5z" fill="#888" />
          </svg>
          <div className="ml-[18px] flex h-[28px] w-[28px] items-center justify-center rounded-[4px] bg-[#2f2f2f]">
            <Tri side="l" />
          </div>
        </div>
      </div>

      <div className="flex h-[42px] shrink-0 items-center">
        {top2.map((g, i) => (
          <div key={i} className="flex items-center">
            {i > 0 && <Sep />}
            {g.map((ic, j) => <div key={j} className="flex w-[41.5px] justify-center">{ic}</div>)}
          </div>
        ))}
        <div className="ml-[2px] h-[30px] w-px bg-[#2f2f2f]" />
        <span className="ml-[4px] w-[14px] text-[#bbb]">X:</span>
        <Spin v="9,488" className="h-[35px] w-[122px]" />
        <span className="ml-[5px] w-[14px] text-[#bbb]">Y:</span>
        <Spin v="9,885" className="h-[35px] w-[123px]" />
        <span className="ml-[5px] w-[14px] text-[#bbb]">B:</span>
        <Spin v="71,380" className="h-[35px] w-[123px]" field="bg-[#333300] max-w-[87px] rounded-l-[6px]" tc="pl-[8px] text-[#f4f400]" />
        <div className="ml-[5px] flex h-[35px] w-[36px] items-center justify-center rounded-[6px] border border-[#1c3557] bg-[#234a7c]">
          <svg width="16" height="18" viewBox="0 0 16 18">
            <rect x="2.5" y="8" width="11" height="9" rx="1" fill="#f4f4f4" />
            <path d="M5 8V5a3 3 0 0 1 6 0v3" fill="none" stroke="#f4f4f4" strokeWidth="2" />
          </svg>
        </div>
        <span className="ml-[6px] w-[15px] text-[#bbb]">H:</span>
        <Spin v="37,476" className="h-[35px] w-[122px]" field="bg-[#333300] max-w-[67px] my-[4px] ml-[2px]" tc="pl-[6px] text-[#f4f400]" />
        <div className="ml-[6px] flex h-[35px] w-[65px] items-center justify-center gap-[5px] rounded-[6px] border border-[#262626] bg-[#2f2f2f] text-[#d0d0d0]">
          mm <Tri />
        </div>
        <div className="ml-[12px] flex gap-[5px]">
          {flowBtn.map((ic, i) => (
            <div key={i} className="flex h-[35px] w-[36px] items-center justify-center rounded-[6px] border border-[#1c3557] bg-[#234a7c]">{ic}</div>
          ))}
        </div>
      </div>

      <div className="flex h-[920px] shrink-0">
        <Tools />
        <CanvasArea />
        <div className="flex w-[12px] shrink-0 flex-col items-center justify-center gap-[2px]">
          <div className="h-[2px] w-[2px] bg-[#ddd]" />
          <div className="h-[2px] w-[2px] bg-[#ddd]" />
          <div className="h-[2px] w-[2px] bg-[#ddd]" />
        </div>
        <Panel />
      </div>

      <Palette />
      <Status />

      {/* the two red pointers drawn over the screenshot */}
      <svg width="1920" height="1111" className="pointer-events-none absolute left-0 top-0">
        <line x1="776" y1="232" x2="826" y2="125" stroke="#ee3a45" strokeWidth="4" />
        <polygon points="836,105 836,131 815,121" fill="#ee3a45" />
        <line x1="960" y1="232" x2="1008" y2="125" stroke="#ee3a45" strokeWidth="4" />
        <polygon points="1019,105 1019,131 998,121" fill="#ee3a45" />
      </svg>
    </div>
  );
}
